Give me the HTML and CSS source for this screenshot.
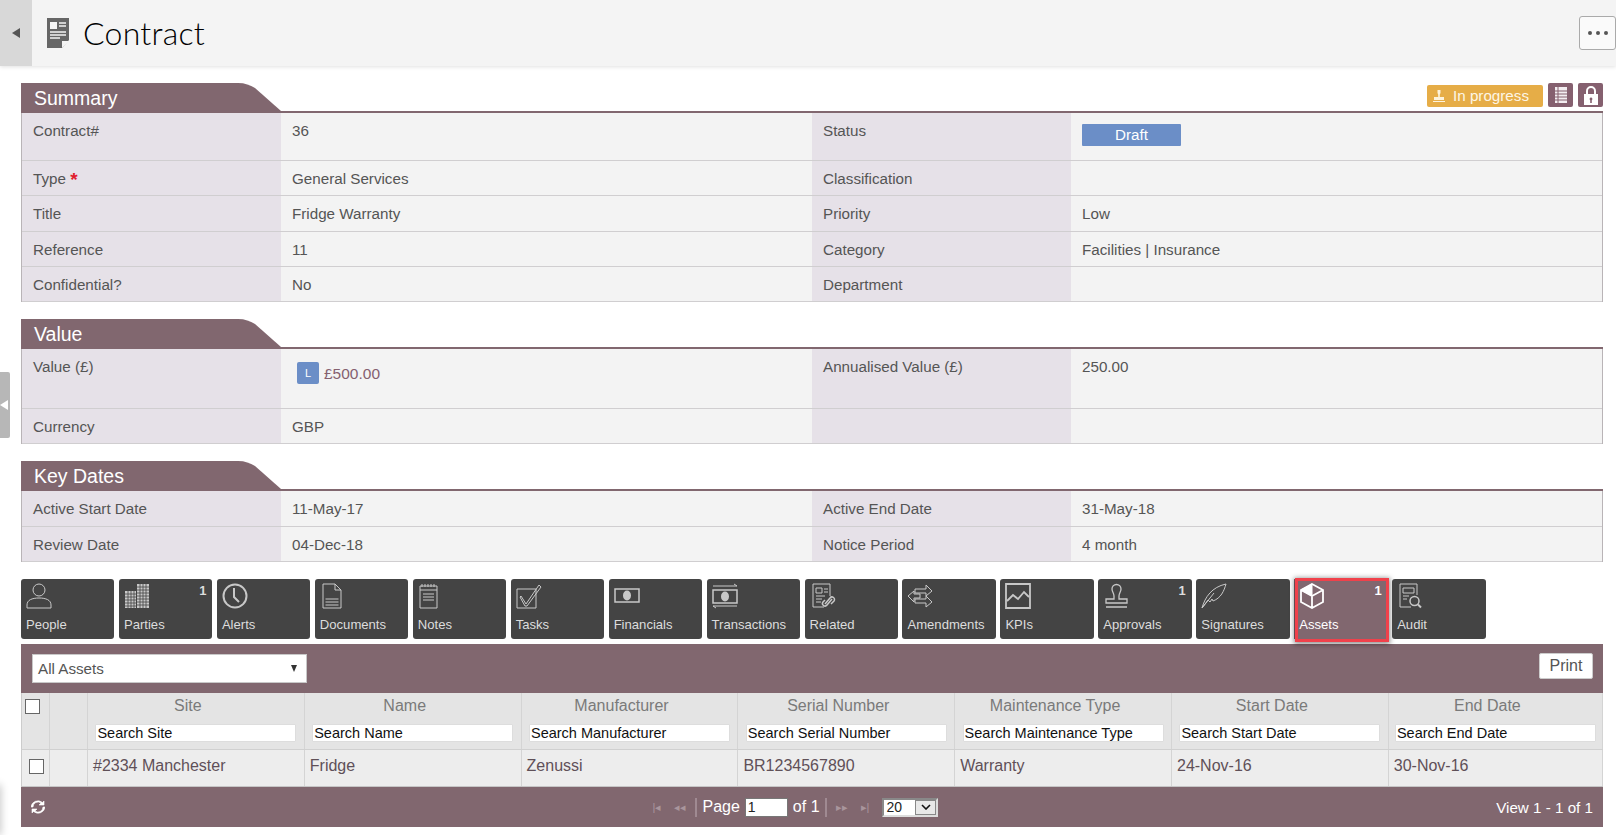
FILE: index.html
```html
<!DOCTYPE html>
<html lang="en">
<head>
    <meta charset="UTF-8">
    <title>Contract</title>
    <link rel="stylesheet" href="styles.css">
</head>
<body>

<header class="page-header">
    <button class="back-toggle"><span class="tri-left"></span></button>
    <svg class="page-icon" viewBox="0 0 22 30">
        <path d="M0 0h22v22l-7 8H0z" fill="#666"/>
        <path d="M15 30v-7h7z" fill="#f4f4f4"/>
        <path d="M3 4h7v7H3z" fill="#f4f4f4"/>
        <path d="M12 5h7M12 8h7M3 14h16M3 17h16M3 20h10" stroke="#f4f4f4" stroke-width="1.3" fill="none"/>
    </svg>
    <h1>Contract</h1>
    <button class="more-btn"><span></span><span></span><span></span></button>
</header>

<div class="side-handle"><span class="tri-left white"></span></div>
<div class="side-shadow"></div>

<main class="content">

    <section class="panel">
        <div class="panel-head">
            <div class="panel-tab">Summary</div>
            <div class="panel-tools">
                <span class="state-pill">
                    <svg viewBox="0 0 12 12" width="12" height="12"><path d="M4.5 0h3v3L6.800 4.500V7H11v3H1V7h4.200V4.500L4.500 3zM0 11h12v1H0z" fill="#fdf3dc"/></svg>
                    In progress
                </span>
                <span class="tool-btn">
                    <svg viewBox="0 0 14 18" width="14" height="18"><path d="M1 1h12v16H1z" fill="#f3eef1"/><path d="M1 5h12M1 8h12M1 11h12M1 14h12M4 1v16" stroke="#85606f" stroke-width="1" fill="none"/></svg>
                </span>
                <span class="tool-btn">
                    <svg viewBox="0 0 16 19" width="16" height="19"><path d="M4 8V5a4 4 0 0 1 8 0v3" fill="none" stroke="#fff" stroke-width="2"/><path d="M1 8h14v11H1z" fill="#fff"/><path d="M8 11.500a1.500 1.500 0 0 1 .8 2.700V17H7.200v-2.800A1.500 1.500 0 0 1 8 11.500z" fill="#85606f"/></svg>
                </span>
            </div>
        </div>
        <div class="fields fields-summary">
            <div class="lbl">Contract#</div><div class="val">36</div>
            <div class="lbl">Status</div><div class="val"><span class="status-pill">Draft</span></div>
            <div class="lbl">Type <b class="req">*</b></div><div class="val">General Services</div>
            <div class="lbl">Classification</div><div class="val"></div>
            <div class="lbl">Title</div><div class="val">Fridge Warranty</div>
            <div class="lbl">Priority</div><div class="val">Low</div>
            <div class="lbl">Reference</div><div class="val">11</div>
            <div class="lbl">Category</div><div class="val">Facilities | Insurance</div>
            <div class="lbl">Confidential?</div><div class="val">No</div>
            <div class="lbl">Department</div><div class="val"></div>
        </div>
    </section>

    <section class="panel">
        <div class="panel-head">
            <div class="panel-tab">Value</div>
        </div>
        <div class="fields fields-value">
            <div class="lbl">Value (£)</div>
            <div class="val"><span class="money"><span class="l-badge">L</span>£500.00</span></div>
            <div class="lbl">Annualised Value (£)</div><div class="val">250.00</div>
            <div class="lbl">Currency</div><div class="val">GBP</div>
            <div class="lbl"></div><div class="val"></div>
        </div>
    </section>

    <section class="panel">
        <div class="panel-head">
            <div class="panel-tab">Key Dates</div>
        </div>
        <div class="fields fields-dates">
            <div class="lbl">Active Start Date</div><div class="val">11-May-17</div>
            <div class="lbl">Active End Date</div><div class="val">31-May-18</div>
            <div class="lbl">Review Date</div><div class="val">04-Dec-18</div>
            <div class="lbl">Notice Period</div><div class="val">4 month</div>
        </div>
    </section>

    <nav class="tabs">
        <a class="tab">
            <svg viewBox="0 0 26 26"><circle cx="13" cy="7" r="6"/><path d="M1 25v-3c0-5 5-7 12-7s12 2 12 7v3z"/></svg>
            People
        </a>
        <a class="tab"><i class="count">1</i>
            <svg viewBox="0 0 26 26"><path class="solid" d="M1 8h11v17H1zM13 1h12v24H13z"/><path class="grid-lines" d="M1 11h11M1 14h11M1 17h11M1 20h11M1 23h11M4 8v17M7 8v17M10 8v17M13 4h12M13 7h12M13 10h12M13 13h12M13 16h12M13 19h12M13 22h12M16 1v24M19 1v24M22 1v24"/></svg>
            Parties
        </a>
        <a class="tab">
            <svg viewBox="0 0 26 26"><circle cx="13" cy="13" r="11.500" stroke-width="2"/><path d="M12 5v9l5 5" stroke-width="2"/></svg>
            Alerts
        </a>
        <a class="tab">
            <svg viewBox="0 0 26 26"><path d="M3 1h12l6 6v18H3zM15 1v6h6M5.500 16h13M5.500 19h13M5.500 22h13"/></svg>
            Documents
        </a>
        <a class="tab">
            <svg viewBox="0 0 26 26"><path d="M2 3h17v22H2zM2 7h17M5 11h11M5 14h11M5 17h11"/><path d="M4 1v3M7 1v3M10 1v3M13 1v3M16 1v3"/></svg>
            Notes
        </a>
        <a class="tab">
            <svg viewBox="0 0 26 26"><path d="M1 6h19v19H1zM5 13l5 8L23 2l2 2-14 19h-2l-5-9z"/></svg>
            Tasks
        </a>
        <a class="tab">
            <svg viewBox="0 0 26 26"><path d="M1 6h24v13H1z" stroke-width="1.500"/><ellipse cx="13" cy="12.500" rx="4" ry="5" fill="#c8c8c8" stroke="none"/></svg>
            Financials
        </a>
        <a class="tab">
            <svg viewBox="0 0 26 26"><path d="M1 7h24v13H1z" stroke-width="1.500"/><ellipse cx="13" cy="13.500" rx="4" ry="5" fill="#c8c8c8" stroke="none"/><path d="M1 3h24l-3-2M25 23H1l3 2"/></svg>
            Transactions
        </a>
        <a class="tab">
            <svg viewBox="0 0 26 26"><path d="M14 24H3V1h17v12M6 5h6v5H6zM14 6h4M14 9h4M6 13h9M6 16h6M6 19h5"/><path d="M15 21l5-6a2.500 2.500 0 0 1 4 3l-3 3M22 16l-5 6a2.500 2.500 0 0 1-4-3l2-2" stroke-width="1.500"/></svg>
            Related
        </a>
        <a class="tab">
            <svg viewBox="0 0 26 26"><path d="M8 6h11V2l6 6-6 5v-3H8zM13 11H7V8l-6 5 6 6v-4h6zM8 16h11v-3l6 6-6 5v-4H8z"/></svg>
            Amendments
        </a>
        <a class="tab">
            <svg viewBox="0 0 26 26"><path d="M1 1h24v24H1z" stroke-width="1.800"/><path d="M2 18l6-6 5 4 6-7 5 5" stroke-width="1.800"/></svg>
            KPIs
        </a>
        <a class="tab"><i class="count">1</i>
            <svg viewBox="0 0 26 26"><path d="M9 6a4.500 4.500 0 0 1 9 0c0 3-2 4-2 7v3h8v4H3v-4h8v-3c0-3-2-4-2-7zM3 24h21" stroke-width="1.300"/></svg>
            Approvals
        </a>
        <a class="tab">
            <svg viewBox="0 0 26 26"><path d="M1 25C4 14 11 4 25 1c-2 7-5 14-13 17l-1-2-2 3-2-2zM1 25l12-15"/></svg>
            Signatures
        </a>
        <a class="tab tab-active"><i class="count">1</i>
            <svg viewBox="0 0 26 26"><path d="M13 1l11 6v12l-11 6-11-6V7zM2 7l11 6 11-6M13 13v12" stroke-width="1.800"/><path d="M13 1L2 7l11 6z" fill="#fff"/></svg>
            Assets
        </a>
        <a class="tab">
            <svg viewBox="0 0 26 26"><path d="M14 24H3V1h17v11M6 5h11v5H6zM6 13h6M6 16h4"/><circle cx="17.500" cy="18" r="4.500" stroke-width="1.500"/><path d="M21 21.500l3 3" stroke-width="2"/></svg>
            Audit
        </a>
    </nav>

    <section class="grid-wrap">
        <div class="grid-toolbar">
            <div class="select-box">All Assets<span class="caret"></span></div>
            <button class="print-btn">Print</button>
        </div>

        <div class="grid-row grid-head">
            <div class="cell cell-check"><span class="check"></span></div>
            <div class="cell"></div>
            <div class="cell"><span class="col-title">Site</span><input class="col-search" value="Search Site"></div>
            <div class="cell"><span class="col-title">Name</span><input class="col-search" value="Search Name"></div>
            <div class="cell"><span class="col-title">Manufacturer</span><input class="col-search" value="Search Manufacturer"></div>
            <div class="cell"><span class="col-title">Serial Number</span><input class="col-search" value="Search Serial Number"></div>
            <div class="cell"><span class="col-title">Maintenance Type</span><input class="col-search" value="Search Maintenance Type"></div>
            <div class="cell"><span class="col-title">Start Date</span><input class="col-search" value="Search Start Date"></div>
            <div class="cell"><span class="col-title">End Date</span><input class="col-search" value="Search End Date"></div>
        </div>

        <div class="grid-row grid-data">
            <div class="cell cell-check"><span class="check"></span></div>
            <div class="cell"></div>
            <div class="cell">#2334 Manchester</div>
            <div class="cell">Fridge</div>
            <div class="cell">Zenussi</div>
            <div class="cell">BR1234567890</div>
            <div class="cell">Warranty</div>
            <div class="cell">24-Nov-16</div>
            <div class="cell">30-Nov-16</div>
        </div>

        <div class="grid-footer">
            <svg class="refresh" viewBox="0 0 14 14" width="14" height="14"><path d="M2 7a5 5 0 0 1 8-4l-2 2h5V1l-1.500 1.500A7 7 0 0 0 0 7zM12 7a5 5 0 0 1-8 4l2-2H1v4l1.500-1.500A7 7 0 0 0 14 7z" fill="#fff" stroke="#fff" stroke-width="0.6"/></svg>
            <div class="pager">
                <span class="pg-ico">|◂</span>
                <span class="pg-ico">◂◂</span>
                <span class="pg-sep"></span>
                <span>Page</span>
                <input class="pg-input" value="1">
                <span>of 1</span>
                <span class="pg-sep"></span>
                <span class="pg-ico">▸▸</span>
                <span class="pg-ico">▸|</span>
                <span class="pg-size">20<span class="pg-arrow"><svg viewBox="0 0 10 6" width="10" height="6"><path d="M1 1l4 4 4-4" fill="none" stroke="#111" stroke-width="1.600"/></svg></span></span>
            </div>
            <div class="view-count">View 1 - 1 of 1</div>
        </div>
    </section>

</main>

</body>
</html>
```

FILE: styles.css
```css
* {
    box-sizing: border-box;
}

html, body {
    margin: 0;
    padding: 0;
    height: 835px;
    overflow: hidden;
    background-color: #fff;
    font-family: "Liberation Sans", Arial, sans-serif;
    font-size: 15.2px;
    color: #555;
}

/* Page header */
.page-header {
    display: flex;
    align-items: center;
    height: 66px;
    background-color: #f4f4f4;
    box-shadow: 0 1px 4px rgba(0, 0, 0, 0.12);
}

.back-toggle {
    width: 32px;
    height: 66px;
    border: none;
    padding: 0;
    background-color: #d8d8d8;
    display: flex;
    align-items: center;
    justify-content: center;
}

.tri-left {
    display: block;
    width: 0;
    height: 0;
    border-top: 5px solid transparent;
    border-bottom: 5px solid transparent;
    border-right: 8px solid #555;
}

.tri-left.white {
    border-right-color: #fff;
}

.page-icon {
    width: 22px;
    height: 30px;
    margin-left: 15px;
}

.page-header h1 {
    margin: -2px 0 0 14px;
    font-family: Lato, sans-serif;
    font-weight: 300;
    font-size: 32px;
    letter-spacing: 0.25px;
    color: #000;
    flex: 1;
}

.more-btn {
    width: 37px;
    height: 34px;
    background-color: #fafafa;
    border: 1px solid #aaa;
    border-radius: 3px;
    padding: 0;
    display: flex;
    align-items: center;
    justify-content: center;
    gap: 4px;
}

.more-btn span {
    width: 4px;
    height: 4px;
    border-radius: 50%;
    background-color: #555;
}

/* Left edge pieces */
.side-handle {
    position: absolute;
    left: 0;
    top: 372px;
    width: 10px;
    height: 66px;
    background-color: #b7b7b7;
    border-radius: 0 2px 2px 0;
    display: flex;
    align-items: center;
}

.side-shadow {
    position: absolute;
    left: -6px;
    top: 785px;
    width: 6px;
    height: 50px;
    box-shadow: 0 0 8px rgba(0, 0, 0, 0.3);
}

.content {
    padding: 17px 13px 0 21px;
}

/* Panels */
.panel {
    margin-bottom: 17px;
}

.panel-head {
    display: flex;
    justify-content: space-between;
    align-items: flex-start;
    height: 30px;
    border-bottom: 2px solid #81676f;
}

.panel-tab {
    width: 260px;
    height: 30px;
    padding: 3px 0 0 13px;
    background-color: #81676f;
    clip-path: path("M0 0H217C224 0 229 2 234 5L260 28V30H0Z");
    color: #fff;
    font-size: 19.500px;
    line-height: 24px;
}

.panel-tools {
    display: flex;
    align-items: center;
    gap: 5px;
}

.state-pill {
    display: flex;
    align-items: center;
    gap: 8px;
    width: 116px;
    height: 22px;
    margin-top: 1px;
    padding-left: 6px;
    background-color: #e6ad47;
    border-radius: 2px;
    color: #fdf6e6;
}

.tool-btn {
    width: 25px;
    height: 24px;
    background-color: #85606f;
    border-radius: 2px;
    display: flex;
    align-items: center;
    justify-content: center;
}

.fields {
    display: grid;
    grid-template-columns: 259px 531px 259px 531px;
    border-left: 1px solid #b9b4b7;
    border-right: 1px solid #b9b4b7;
}

.fields-summary {
    grid-template-rows: 48px 35px 36px 35px 35px;
}

.fields-value {
    grid-template-rows: 60px 35px;
}

.fields-dates {
    grid-template-rows: 36px 35px;
}

.lbl, .val {
    padding: 9px 10px 0 11px;
    line-height: 17px;
    border-bottom: 1px solid #d0ced0;
    overflow: hidden;
}

.val {
    background-color: #f3f3f3;
}

.lbl {
    background-color: #e6e1e8;
}

.req {
    color: #e0202e;
    font-size: 19px;
    line-height: 0;
    vertical-align: -2px;
}

.status-pill {
    display: block;
    width: 99px;
    height: 22px;
    margin-top: 2px;
    background-color: #6b8ec7;
    color: #fff;
    text-align: center;
    line-height: 22px;
    border-radius: 1px;
}

.money {
    display: flex;
    align-items: center;
    gap: 5px;
    margin: 4px 0 0 5px;
    font-size: 15.500px;
    color: #85606f;
}

.l-badge {
    width: 22px;
    height: 22px;
    border-radius: 2px;
    background-color: #6b8ec7;
    color: #fff;
    font-size: 11px;
    text-align: center;
    line-height: 22px;
}

/* Tabs */
.tabs {
    display: flex;
    gap: 4.500px;
}

.tab {
    position: relative;
    width: 93.450px;
    height: 60px;
    padding: 4px 5px 0;
    background-color: #444;
    border-radius: 3px;
    color: #ddd;
    font-size: 13.100px;
    display: flex;
    flex-direction: column;
    gap: 8px;
}

.tab svg {
    width: 26px;
    height: 26px;
    fill: none;
    stroke: #c8c8c8;
    stroke-width: 1;
}

.tab svg .solid {
    fill: #c8c8c8;
    stroke: none;
}

.tab svg .grid-lines {
    stroke: #444;
    stroke-width: 0.8;
}

.count {
    position: absolute;
    top: 4px;
    right: 6px;
    font-style: normal;
    font-weight: bold;
    font-size: 13px;
    color: #ddd;
}

.tab-active {
    background-color: #81676f;
    color: #fff;
    border-radius: 0;
}

.tab-active::after {
    content: "";
    position: absolute;
    top: -1px;
    left: 1px;
    right: -1px;
    bottom: -3px;
    border: 3px solid #f0414b;
    box-shadow: 0 1px 5px 1px rgba(0, 0, 0, 0.45);
}

.tab-active svg {
    stroke: #fff;
}

.tab-active .count {
    color: #fff;
}

/* Assets grid */
.grid-wrap {
    margin-top: 5px;
}

.grid-toolbar {
    height: 49px;
    background-color: #81676f;
    padding: 10px 10px 0 11px;
    display: flex;
    justify-content: space-between;
    align-items: flex-start;
}

.select-box {
    width: 275px;
    height: 29px;
    background-color: #fff;
    border: 1px solid #c8c8c8;
    padding: 0 5px;
    line-height: 27px;
    color: #555;
    position: relative;
}

.caret {
    position: absolute;
    right: 9px;
    top: 10px;
    width: 0;
    height: 0;
    border-left: 3px solid transparent;
    border-right: 3px solid transparent;
    border-top: 7px solid #333;
}

.print-btn {
    width: 54px;
    height: 26px;
    margin-top: -1px;
    background-color: #fff;
    border: 1px solid #ccc;
    border-radius: 2px;
    font-family: inherit;
    font-size: 16px;
    color: #555;
    padding: 0;
}

.grid-row {
    display: grid;
    grid-template-columns: 28px 38px repeat(6, 216.800px) 1fr;
    border-left: 1px solid #ccc;
}

.cell {
    border-right: 1px solid #d4d4d4;
    overflow: hidden;
}

.check {
    display: block;
    width: 15px;
    height: 15px;
    border: 1px solid #666;
    background-color: #fff;
}

.grid-head {
    height: 57px;
    background-color: #e4e4e4;
    border-bottom: 1px solid #d0d0d0;
}

.grid-head .cell {
    display: flex;
    flex-direction: column;
    align-items: center;
    padding-top: 3px;
}

.grid-head .cell-check {
    align-items: flex-start;
    padding: 6px 0 0 3px;
}

.col-title {
    margin-right: 16px;
    font-size: 16px;
    line-height: 20px;
    color: #7a7a7a;
}

.col-search {
    width: 201px;
    height: 18px;
    margin-top: 8px;
    padding: 0 1px;
    border: 1px solid #ddd;
    border-radius: 1px;
    background-color: #fff;
    font-family: inherit;
    font-size: 14.500px;
    color: #111;
}

.grid-data {
    height: 37px;
    background-color: #ededed;
    border-bottom: 1px solid #c6c6c6;
    font-size: 16px;
    color: #5f5058;
}

.grid-data .cell {
    padding: 7px 5px 0;
}

.grid-data .cell-check {
    padding: 9px 0 0 7px;
}

.grid-footer {
    height: 40px;
    background-color: #81676f;
    display: grid;
    grid-template-columns: 1fr auto 1fr;
    align-items: center;
    padding: 0 10px;
    color: #fff;
}

.pager {
    display: flex;
    align-items: center;
    gap: 5px;
    margin-right: 37px;
    font-size: 16px;
}

.pg-ico {
    font-size: 11px;
    color: #a9959c;
    margin: 0 4px;
}

.pg-sep {
    width: 2px;
    height: 19px;
    background-color: #a08a92;
}

.pg-input {
    width: 43px;
    height: 19px;
    border: 1px solid #777;
    padding: 0 2px;
    font-family: inherit;
    font-size: 14px;
    color: #222;
    background-color: #fff;
}

.pg-size {
    display: flex;
    justify-content: space-between;
    width: 56px;
    height: 19px;
    margin-left: 4px;
    padding-left: 2px;
    background-color: #fff;
    border: 2px inset #ddd;
    font-size: 14px;
    line-height: 15px;
    color: #222;
}

.pg-arrow {
    width: 21px;
    background-color: #e8e8e8;
    border: 1px solid #888;
    display: flex;
    align-items: center;
    justify-content: center;
}

.view-count {
    text-align: right;
}
```
